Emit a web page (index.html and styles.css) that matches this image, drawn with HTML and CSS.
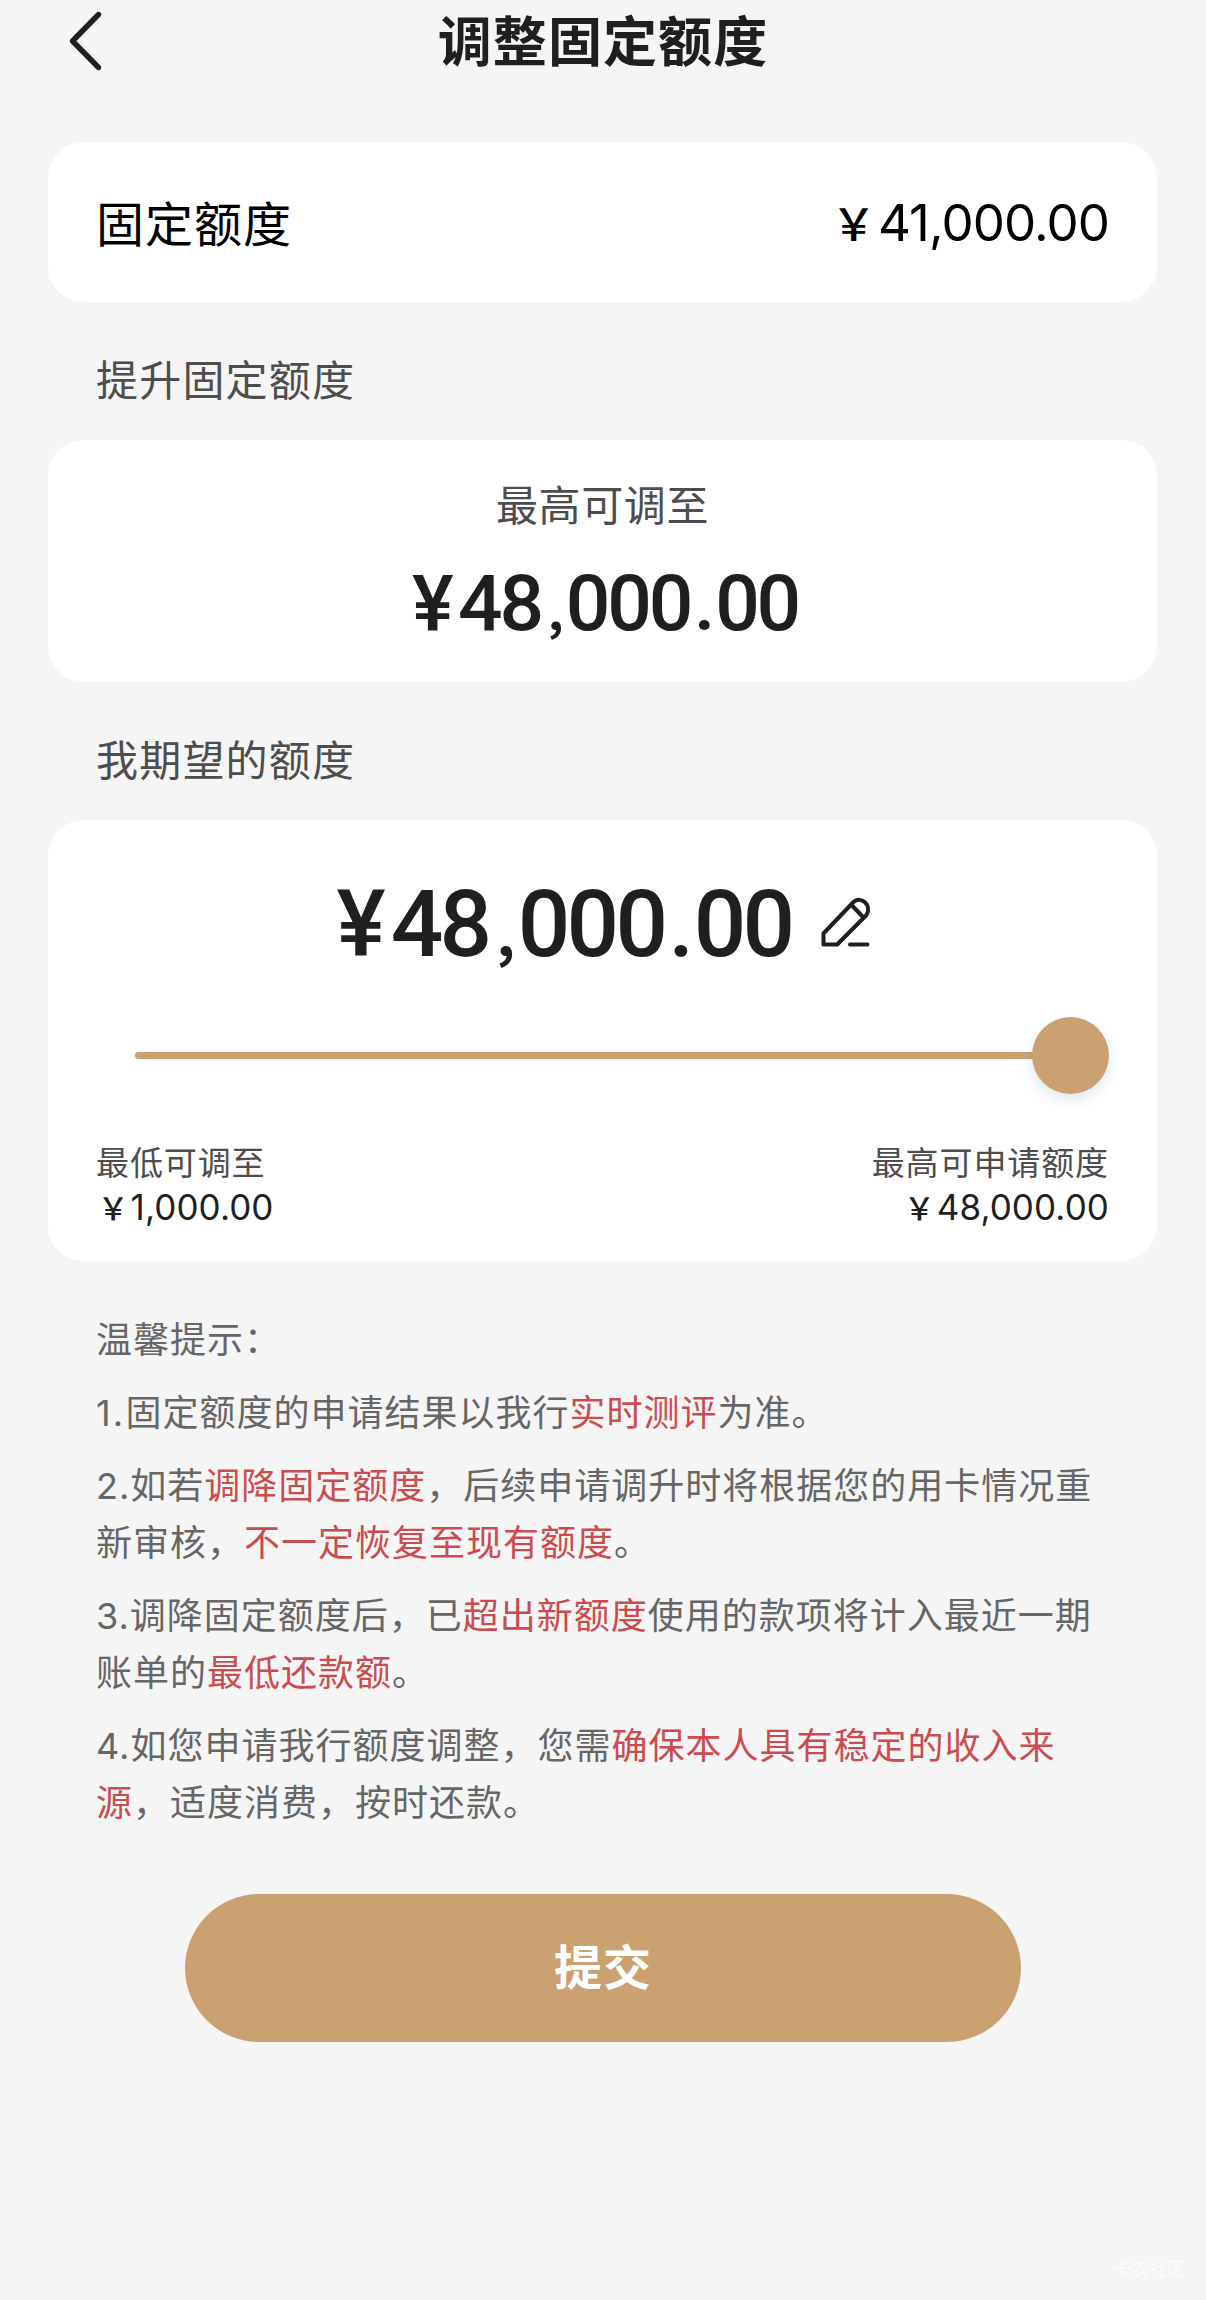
FILE: index.html
```html
<!DOCTYPE html>
<html lang="zh-CN">
<head>
<meta charset="utf-8">
<title>调整固定额度</title>
<link rel="stylesheet" href="styles.css">
</head>
<body>
<div class="page">
  <header class="header">
    <svg class="back" viewBox="0 0 40 64" fill="none" stroke="#1f1f1f" stroke-width="5.4" stroke-linecap="round" stroke-linejoin="round"><path d="M30.500 5.500 4.500 32 30.500 58.500"/></svg>
    <h1 class="title">调整固定额度</h1>
  </header>
  <main class="content">
    <section class="card current">
      <span class="current-label">固定额度</span>
      <span class="current-value"><span class="yen">&#xFFE5;</span>41,000.00</span>
    </section>
    <h2 class="section-title">提升固定额度</h2>
    <section class="card max">
      <div class="max-label">最高可调至</div>
      <div class="amount amount-max"><span class="amount-yen">¥</span>48<span class="comma">,</span>000<span class="dot">.</span>00</div>
    </section>
    <h2 class="section-title">我期望的额度</h2>
    <section class="card wish">
      <div class="wish-row">
        <div class="amount amount-wish"><span class="amount-yen">¥</span>48<span class="comma">,</span>000<span class="dot">.</span>00</div>
        <svg class="edit" viewBox="0 0 52 52" fill="none" stroke="#1f1f1f" stroke-width="4" stroke-linecap="round" stroke-linejoin="round"><path d="M3.500 37.500 33.500 6C40.500-.5 52.500 9 46.500 19L17.200 48.500H3.500ZM31 8.500 43.500 21.500M30 48.500H47.500"/></svg>
      </div>
      <div class="slider"><div class="track"></div><div class="thumb"></div></div>
      <div class="range">
        <div class="range-end">
          <div class="range-label">最低可调至</div>
          <div class="range-value"><span class="yen">&#xFFE5;</span>1,000.00</div>
        </div>
        <div class="range-end right">
          <div class="range-label">最高可申请额度</div>
          <div class="range-value"><span class="yen">&#xFFE5;</span>48,000.00</div>
        </div>
      </div>
    </section>
    <section class="tips">
      <p>温馨提示：</p>
      <p><span class="num">1.</span>固定额度的申请结果以我行<em>实时测评</em>为准。</p>
      <p>2.如若<em>调降固定额度</em>，后续申请调升时将根据您的用卡情况重<br>新审核，<em>不一定恢复至现有额度</em>。</p>
      <p>3.调降固定额度后，已<em>超出新额度</em>使用的款项将计入最近一期<br>账单的<em>最低还款额</em>。</p>
      <p>4.如您申请我行额度调整，您需<em>确保本人具有稳定的收入来<br>源</em>，适度消费，按时还款。</p>
    </section>
    <button class="submit" type="button">提交</button>
  </main>
  <div class="watermark">卡农社区</div>
</div>
</body>
</html>
```
FILE: styles.css
```css
* { box-sizing: border-box; margin: 0; padding: 0; }
body {
  background: #f5f5f5;
  color: #1f1f1f;
  font-family: Inter, "Noto Sans CJK SC", sans-serif;
}
.page {
  width: 1206px;
  height: 2300px;
  overflow: hidden;
  display: flex;
  flex-direction: column;
}
.header {
  height: 142px;
  padding: 0 68px;
  display: grid;
  grid-template-columns: 40px 1fr 40px;
  align-items: start;
}
.back { width: 40px; height: 64px; margin-top: 9px; }
.title {
  font-size: 54px;
  line-height: 80px;
  padding-top: 3px;
  font-weight: 700;
  letter-spacing: 1.1px;
  text-align: center;
}
.content { padding: 0 49px 0 48px; display: flex; flex-direction: column; }
.card { background: #fff; border-radius: 36px; }
.current {
  height: 160px;
  padding: 0 48px 0 48px;
  display: flex;
  align-items: center;
  justify-content: space-between;
  color: #000;
}
.current-label { font-size: 48px; letter-spacing: 1px; margin-top: -3px; }
.current-value { font-size: 51px; line-height: 60px; letter-spacing: -.9px; padding-top: 1px; display: flex; align-items: baseline; }
.yen {
  padding: 0 .06em 0 .06em;
  font-family: "Noto Sans CJK SC", sans-serif;
  font-size: .88em;
  font-weight: 500;
}
.section-title {
  height: 138px;
  padding: 20px 0 0 48px;
  font-size: 42px;
  line-height: 118px;
  font-weight: 400;
  letter-spacing: 1.2px;
  color: #4d4d4d;
}
.max { height: 242px; padding-top: 36px; text-align: center; }
.max-label { font-size: 42px; line-height: 60px; letter-spacing: .6px; color: #4d4d4d; }
.amount {
  font-family: Roboto, sans-serif;
  font-weight: 500;
  display: flex;
  align-items: baseline;
  justify-content: center;
  letter-spacing: -.04em;
}
.amount-max { font-size: 78.500px; line-height: 90px; margin-top: 22px; padding-left: 5px; }
.amount-yen { margin-right: .095em; }
.comma {
  padding: 0 .11em 0 .14em;
  font-family: "Noto Sans CJK SC", sans-serif;
  font-size: .62em;
  font-weight: 700;
  line-height: 1;
}
.dot { padding: 0 .035em 0 .045em; }
.wish { height: 441px; padding: 0 48px; display: flex; flex-direction: column; }
.wish-row { height: 197px; padding: 52px 0 0 3px; display: flex; justify-content: center; gap: 28px; }
.amount-wish { font-size: 92.500px; line-height: 106px; }
.edit { width: 52px; height: 52px; margin-top: 24px; }
.slider { height: 77px; padding-left: 39px; display: flex; align-items: center; }
.track { flex: 1; height: 7px; margin-right: -3px; border-radius: 4px; background: #cba171; }
.thumb {
  width: 77px;
  height: 77px;
  border-radius: 50%;
  background: #cba171;
  box-shadow: 0 6px 14px rgba(70, 110, 140, .16);
}
.range { margin-top: 44px; display: flex; justify-content: space-between; }
.range-label { font-size: 33px; line-height: 50px; letter-spacing: .9px; color: #4d4d4d; }
.range-value { font-size: 35px; line-height: 38px; display: flex; align-items: baseline; letter-spacing: .1px; }
.right .range-value { justify-content: flex-end; }
.tips {
  padding: 51px 0 0 48px;
  font-size: 36px;
  line-height: 57px;
  letter-spacing: 1px;
  color: #666;
  white-space: nowrap;
}
.num { letter-spacing: 2.2px; }
.tips p + p { margin-top: 16px; }
.tips em { font-style: normal; color: #ca4c4e; }
.submit {
  width: 836px;
  height: 148px;
  margin: 62px 0 0 137px;
  border: 0;
  border-radius: 74px;
  background: #cba171;
  color: #fff;
  font: 700 48px/148px Inter, "Noto Sans CJK SC", sans-serif;
  letter-spacing: 1px;
}
.watermark {
  margin: auto 21px 16px auto;
  font-size: 18px;
  line-height: 28px;
  color: #fcfcfc;
}
```
